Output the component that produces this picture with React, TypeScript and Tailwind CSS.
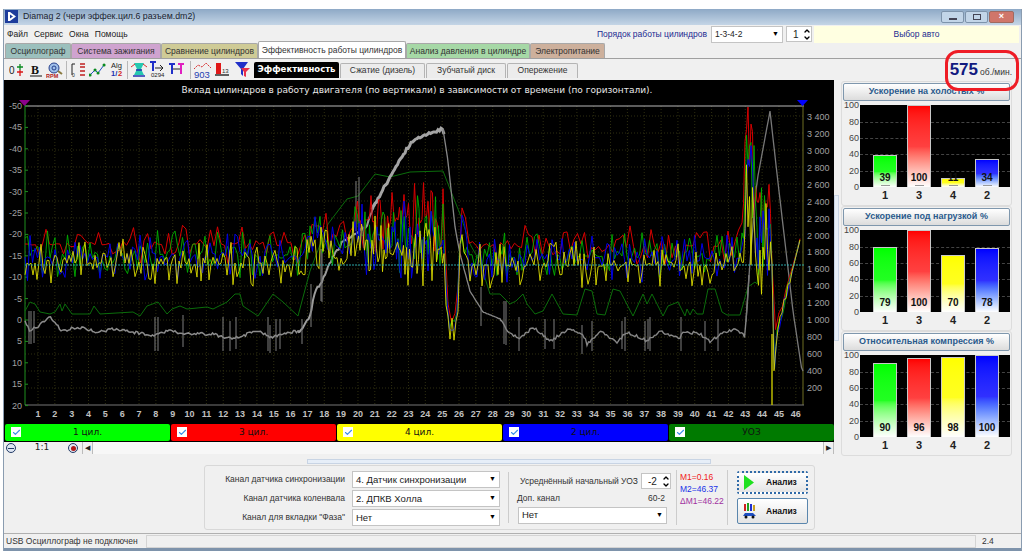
import { Check, ChevronDown, ChevronUp } from "lucide-react";

// cheap seeded random so the traces stay the same on every load
function rng(seed: number) {
  let s = seed;
  return () => {
    s = (s + 0x6d2b79f5) | 0;
    let t = Math.imul(s ^ (s >>> 15), 1 | s);
    t = (t + Math.imul(t ^ (t >>> 7), 61 | t)) ^ t;
    return ((t ^ (t >>> 14)) >>> 0) / 4294967296;
  };
}

type Pt = [number, number];

function interp(points: Pt[], x: number) {
  for (let i = 1; i < points.length; i++) {
    if (x <= points[i][0]) {
      const [x0, y0] = points[i - 1];
      const [x1, y1] = points[i];
      return y0 + ((y1 - y0) * (x - x0)) / (x1 - x0 || 1);
    }
  }
  return points[points.length - 1][1];
}

function toPath(points: Pt[]) {
  return points.map((p, i) => `${i ? "L" : "M"}${p[0].toFixed(1)} ${p[1].toFixed(1)}`).join(" ");
}

const centerLine: Pt[] = [
  [25, 256], [300, 256], [312, 236], [330, 250], [345, 250], [360, 238], [443, 236], [447, 300], [450, 335],
  [455, 322], [458, 310], [460, 236], [470, 258], [482, 258], [740, 258], [744, 230], [747, 160], [752, 160],
  [756, 225], [770, 235], [772, 270], [773, 385], [776, 335], [800, 240],
];
const ampLine: Pt[] = [
  [25, 12], [300, 12], [345, 13], [360, 20], [443, 20], [447, 8], [458, 8], [460, 14], [470, 12], [740, 12],
  [746, 40], [752, 40], [756, 26], [770, 26], [772, 6], [776, 5], [800, 0.5],
];

// peaked noise: most samples stay near the band, a few spike out of it
function cylinderTrace(seed: number, offset: number, step: number, noise: number) {
  const r = rng(seed);
  const pts: Pt[] = [];
  let x = 25;
  while (x <= 800) {
    const a = interp(ampLine, x);
    const n = r() - 0.5;
    const y = interp(centerLine, x) + (offset * a) / 12 + 3.2 * n * Math.abs(n) * noise * (a / 12);
    pts.push([x, Math.max(108, y)]);
    x += a >= 18 ? 1.5 : step;
  }
  return toPath(pts);
}

const greenKeys: Pt[] = [
  [25, 312], [30, 303], [35, 305], [40, 313], [50, 315], [55, 313], [60, 305], [62, 312], [65, 305], [72, 315],
  [90, 315], [94, 307], [100, 315], [133, 313], [140, 317], [147, 307], [158, 303], [167, 315], [172, 310],
  [180, 307], [187, 310], [207, 308], [213, 310], [227, 303], [235, 295], [240, 295], [243, 307], [258, 317],
  [273, 295], [283, 303], [298, 317], [302, 302], [310, 272], [328, 225], [347, 200], [358, 197], [375, 175],
  [390, 178], [410, 173], [443, 172], [450, 190], [460, 215], [470, 245], [480, 263], [490, 295], [500, 295],
  [510, 305], [516, 302], [523, 295], [527, 305], [535, 315], [543, 312], [552, 295], [563, 315], [577, 316],
  [585, 290], [592, 292], [597, 315], [605, 316], [613, 290], [620, 292], [633, 317], [643, 295], [647, 305],
  [652, 295], [663, 317], [668, 307], [678, 303], [685, 317], [687, 310], [690, 316], [693, 310], [697, 315],
  [703, 315], [708, 290], [715, 290], [722, 313], [727, 316], [740, 316], [748, 288], [755, 283], [757, 285],
  [760, 258],
];

const grayKeys: Pt[] = [
  [25, 322], [30, 332], [37, 328], [50, 318], [62, 332], [77, 328], [97, 333], [113, 330], [133, 333], [155, 337],
  [167, 332], [190, 335], [213, 335], [233, 340], [257, 332], [272, 338], [293, 333], [300, 333], [310, 318],
  [315, 292], [322, 282], [333, 258], [343, 242], [367, 227], [373, 208], [393, 173], [410, 145], [420, 138],
  [443, 130], [448, 162], [455, 228], [460, 255], [470, 292], [483, 313], [500, 320], [507, 332], [520, 340],
  [533, 328], [550, 342], [570, 330], [583, 335], [587, 345], [600, 332], [617, 343], [627, 333], [647, 342],
  [660, 332], [680, 340], [683, 332], [700, 335], [710, 343], [723, 333], [737, 330], [745, 338], [750, 262],
  [757, 182], [770, 112], [777, 175], [793, 312], [802, 372],
];

function grayTrace(from: number, to: number, jitter: number) {
  const r = rng(from + 7);
  const pts: Pt[] = [];
  for (let x = from; x <= to; x += 1.5) {
    pts.push([x, interp(grayKeys, x) + (r() - 0.5) * jitter]);
  }
  return toPath(pts);
}

const graySpikes: [number, number, number][] = [
  [29, 312, 345], [31, 312, 345], [34, 312, 344], [155, 318, 352], [158, 318, 352], [183, 316, 348], [223, 318, 352],
  [230, 322, 352], [236, 318, 350], [268, 318, 352], [270, 326, 354], [276, 320, 352], [280, 320, 350], [302, 320, 345],
  [311, 285, 328], [321, 250, 302], [322, 250, 303], [356, 182, 232], [359, 178, 232], [481, 288, 327], [504, 302, 345],
  [506, 302, 346], [519, 318, 352], [545, 320, 350], [554, 320, 350], [582, 326, 355], [592, 322, 352], [622, 322, 350],
  [625, 318, 352], [645, 322, 352], [648, 320, 350], [650, 318, 352], [681, 318, 352], [705, 322, 352], [718, 320, 352],
];

const yLabels = [-50, -45, -40, -35, -30, -25, -20, -15, -10, -5, 0, 5, 10, 15, 20];
const rpmLabels = ["200", "400", "600", "800", "1 000", "1 200", "1 400", "1 600", "1 800", "2 000", "2 200", "2 400", "2 600", "2 800", "3 000", "3 200", "3 400"];
const xLabels = Array.from({ length: 46 }, (_, i) => i + 1);
const hGrid = Array.from({ length: 17 }, (_, i) => 406 - (i + 1) * 17);
const tickFont = "'Liberation Sans', sans-serif";

function MainChart() {
  return (
    <svg width={830} height={344} viewBox="4 81 830 344" className="block bg-black">
      <text x={417} y={94} fill="#e8e8e8" fontSize={9} textAnchor="middle" fontFamily="'DejaVu Sans', sans-serif">
        Вклад цилиндров в работу двигателя (по вертикали) в зависимости от времени (по горизонтали).
      </text>

      {xLabels.map((n) => (
        <line key={n} x1={38 + (n - 1) * 16.84} x2={38 + (n - 1) * 16.84} y1={107} y2={406} stroke="#2e2e10" strokeDasharray="1 2" />
      ))}
      {hGrid.map((y) => (
        <line key={y} x1={25} x2={803} y1={y} y2={y} stroke="#2e2e10" strokeDasharray="1 2" />
      ))}

      <line x1={25} x2={804} y1={107} y2={107} stroke="#b8b8b8" />
      <line x1={25} x2={25} y1={107} y2={406} stroke="#1f8f1f" />
      <line x1={803} x2={803} y1={107} y2={406} stroke="#6e6e22" />
      <line x1={25} x2={804} y1={406} y2={406} stroke="#777" />
      {yLabels.map((v, i) => (
        <g key={v}>
          <line x1={25} x2={28} y1={107 + i * 21.4} y2={107 + i * 21.4} stroke="#1f8f1f" />
          <text x={22} y={110 + i * 21.4} fill="#a0a0a0" fontSize={9} textAnchor="end" fontFamily={tickFont}>
            {v}
          </text>
        </g>
      ))}
      {rpmLabels.map((v, i) => (
        <text key={v} x={807} y={392 - i * 16.94} fill="#a0a0a0" fontSize={9} fontFamily={tickFont}>
          {v}
        </text>
      ))}
      {xLabels.map((n) => (
        <text key={n} x={38 + (n - 1) * 16.84} y={418} fill="#c0c0c0" fontSize={9} fontWeight="bold" textAnchor="middle" fontFamily={tickFont}>
          {n}
        </text>
      ))}

      <path d="M19 101 H30 L24.5 107 Z" fill="#8b008b" />
      <path d="M797 101 H808 L802.5 107 Z" fill="#0000ff" />

      <path d={toPath(greenKeys)} fill="none" stroke="#0b6d0b" strokeWidth={1} />
      <path d={grayTrace(25, 300, 3)} fill="none" stroke="#8c8c8c" strokeWidth={1.5} />
      <path d={grayTrace(298, 376, 3)} fill="none" stroke="#9c9c9c" strokeWidth={2} />
      <path d={grayTrace(372, 445, 3)} fill="none" stroke="#a4a4a4" strokeWidth={3} />
      <path d={grayTrace(443, 502, 0.8)} fill="none" stroke="#868686" strokeWidth={1.3} />
      <path d={grayTrace(500, 749, 3)} fill="none" stroke="#868686" strokeWidth={1.4} />
      <path d={grayTrace(746, 803, 0.5)} fill="none" stroke="#787878" strokeWidth={1.3} />
      {graySpikes.map(([x, y1, y2], i) => (
        <line key={i} x1={x} x2={x} y1={y1} y2={y2} stroke="#7e7e7e" />
      ))}

      <path d={cylinderTrace(11, -11, 3.5, 26)} fill="none" stroke="#d80000" strokeWidth={1} />
      <path d={cylinderTrace(23, -1, 2.5, 30)} fill="none" stroke="#00b000" strokeWidth={0.9} />
      <path d={cylinderTrace(37, 2, 2.5, 30)} fill="none" stroke="#0000e6" strokeWidth={1} />
      <path d={cylinderTrace(41, 8, 2, 30)} fill="none" stroke="#dcdc00" strokeWidth={0.9} />
      <line x1={25} x2={804} y1={266} y2={266} stroke="#2aa7a7" strokeDasharray="2 1" />
      <line x1={772} x2={772} y1={335} y2={406} stroke="#c8c800" strokeWidth={1.4} />
    </svg>
  );
}

const legend = [
  { label: "1 цил.", bg: "bg-[#00ff00]" },
  { label: "3 цил.", bg: "bg-[#ff0000]" },
  { label: "4 цил.", bg: "bg-[#ffff00]" },
  { label: "2 цил.", bg: "bg-[#0000ff]" },
  { label: "УОЗ", bg: "bg-[#007a00]" },
];

function Legend() {
  return (
    <div className="flex h-[18px] w-[830px] gap-[1px] bg-black pl-[1px] [font-family:'DejaVu_Sans',sans-serif]">
      {legend.map((l) => (
        <div key={l.label} className={`relative flex h-[17px] flex-1 items-center justify-center rounded-[2px] text-[9px] text-[#111] ${l.bg}`}>
          <span className="absolute left-[6px] top-[3px] flex h-[10px] w-[10px] items-center justify-center bg-white">
            <Check size={9} strokeWidth={3} className="text-[#3b8ee8]" />
          </span>
          {l.label}
        </div>
      ))}
    </div>
  );
}

function ScaleRow() {
  return (
    <div className="flex h-[12px] w-[830px] items-center text-[9px] text-[#222]">
      <span className="ml-[2px] flex h-[10px] w-[10px] items-center justify-center rounded-full border border-[#223a66] bg-[#dfe6f2]">
        <span className="h-[1px] w-[6px] bg-[#223a66]" />
      </span>
      <span className="w-[52px] text-center [font-family:'DejaVu_Sans',sans-serif]">1:1</span>
      <span className="flex h-[10px] w-[10px] items-center justify-center rounded-full border border-[#223a66] bg-[#dfe6f2]">
        <span className="h-[5px] w-[5px] rounded-full bg-[#b01818]" />
      </span>
      <span className="ml-[4px] flex h-[12px] w-[11px] items-center justify-center border-x border-[#bbb] text-[7px]">◀</span>
      <span className="h-[12px] flex-1 bg-[#f7f7f7]" />
      <span className="flex h-[12px] w-[11px] items-center justify-center border-x border-[#bbb] text-[7px]">▶</span>
    </div>
  );
}

type BarChartProps = {
  title: string;
  values: number[];
  marks?: boolean;
};

const bars = [
  { label: "1", fill: "from-[#00ff00] via-[#22ff22]" },
  { label: "3", fill: "from-[#ff0000] via-[#ff4040]" },
  { label: "4", fill: "from-[#ffff00] via-[#ffff20]" },
  { label: "2", fill: "from-[#0000ff] via-[#3030ff]" },
];

function BarChart({ title, values, marks }: BarChartProps) {
  return (
    <div className="rounded-[3px] border border-[#dcdcdc] px-[1px] pb-[1px] pt-[1px]">
      <div className="flex h-[18px] items-center justify-center rounded-[2px] border border-[#7f97ad] bg-gradient-to-b from-white to-[#dcdcdc] text-[9px] font-bold text-[#2a5a8c]">
        {title}
      </div>
      <div className="mt-[4px] flex">
        <div className="-my-[5px] flex h-[92px] w-[16px] flex-col justify-between text-right text-[9px] leading-[10px] text-[#444]">
          {[100, 80, 60, 40, 20, 0].map((t) => (
            <span key={t}>{t}</span>
          ))}
        </div>
        <div className="relative ml-[1px] h-[82px] w-[150px] bg-black pl-[8px]">
          {[1, 2, 3, 4].map((i) => (
            <div key={i} className="absolute inset-x-0 border-t border-dashed border-[#444]" style={{ top: i * 16.4 }} />
          ))}
          <div className="relative grid h-full w-[136px] grid-cols-4">
            {bars.map((b, i) => (
              <div key={b.label} className="flex h-full items-end justify-center">
                <div
                  className={`relative w-[24px] border border-b-0 border-[#c8c8c8] bg-gradient-to-b ${b.fill} to-white`}
                  style={{ height: (82 * values[i]) / 100 }}
                >
                  <span className="absolute inset-x-0 bottom-[3px] text-center text-[10px] font-bold leading-[12px] text-[#111]">
                    {values[i]}
                  </span>
                  {marks && <span className="absolute bottom-[1px] left-[7px] h-[1px] w-[9px] bg-[#999]" />}
                </div>
              </div>
            ))}
          </div>
        </div>
      </div>
      <div className="ml-[25px] grid h-[17px] w-[136px] grid-cols-4 items-center text-center text-[11px] font-bold text-[#222]">
        {bars.map((b) => (
          <span key={b.label}>{b.label}</span>
        ))}
      </div>
    </div>
  );
}

function Select({ value, w, size }: { value: string; w: string; size: string }) {
  return (
    <div className={`flex h-[17px] items-center justify-between border border-[#c4c4c4] bg-white px-[3px] text-[#222] ${w} ${size}`}>
      <span>{value}</span>
      <span className="text-[7px] text-black">▼</span>
    </div>
  );
}

function Spinner({ value, w }: { value: string; w: string }) {
  return (
    <div className={`flex h-[16px] items-center justify-between border border-[#c4c4c4] bg-white pl-[6px] text-[10px] text-[#222] ${w}`}>
      <span>{value}</span>
      <span className="flex flex-col">
        <ChevronUp size={8} strokeWidth={4} className="-mb-[1px] text-black" />
        <ChevronDown size={8} strokeWidth={4} className="text-black" />
      </span>
    </div>
  );
}

function IconCell({ children }: { children: React.ReactNode }) {
  return <div className="flex h-[18px] w-[19px] items-center justify-center">{children}</div>;
}

function Toolbar() {
  return (
    <div className="flex items-center pl-[3px]">
      <IconCell>
        <svg width="16" height="14" viewBox="0 0 16 14">
          <text x="0" y="11" fontSize="10" fill="#222" fontFamily={tickFont}>0</text>
          <path d="M8 4h6M11 1v6" stroke="#0a8a20" strokeWidth="1.3" />
          <path d="M8 9h6M11 7v6" stroke="#d81818" strokeWidth="1.3" />
        </svg>
      </IconCell>
      <IconCell>
        <svg width="16" height="14" viewBox="0 0 16 14">
          <text x="3" y="11" fontSize="12" fontWeight="bold" fill="#111" fontFamily="'Liberation Serif', serif">B</text>
          <path d="M2 13h12" stroke="#111" />
        </svg>
      </IconCell>
      <IconCell>
        <svg width="18" height="16" viewBox="0 0 18 16">
          <circle cx="8" cy="6" r="5" fill="#9fc0ea" stroke="#27408c" />
          <circle cx="8" cy="6" r="2" fill="none" stroke="#27408c" />
          <path d="M12 9l4 3" stroke="#8a7a40" strokeWidth="2" />
          <text x="0" y="15.5" fontSize="5.5" fontWeight="bold" fill="#b02020" fontFamily={tickFont}>RPM</text>
        </svg>
      </IconCell>
      <span className="mx-[2px] h-[18px] border-l border-[#b8b8b8]" />
      <IconCell>
        <svg width="16" height="16" viewBox="0 0 16 16">
          <path d="M1 2v11M1 2h3" stroke="#222" strokeWidth="1" fill="none" />
          <text x="1" y="15" fontSize="5" fill="#222" fontFamily={tickFont}>0</text>
          <path d="M9 2h5M9 5h5M9 9h5M9 13h5" stroke="#c02020" strokeWidth="1.4" />
        </svg>
      </IconCell>
      <IconCell>
        <svg width="17" height="14" viewBox="0 0 17 14">
          <path d="M1 12l5-5 3 3 6-8" stroke="#1f4fc0" strokeWidth="1" fill="none" />
          <path d="M1 12h.1M6 7h.1M9 10h.1M15 2h.1" stroke="#0a8a20" strokeWidth="3" strokeLinecap="round" />
        </svg>
      </IconCell>
      <IconCell>
        <svg width="16" height="17" viewBox="0 0 16 17">
          <text x="2" y="7" fontSize="7.5" fill="#222" fontFamily={tickFont}>Alg</text>
          <text x="2" y="15" fontSize="7.5" fontWeight="bold" fill="#2030b0" fontFamily={tickFont}>1/</text>
          <text x="9" y="15" fontSize="7.5" fontWeight="bold" fill="#d02020" fontFamily={tickFont}>2</text>
        </svg>
      </IconCell>
      <span className="mx-[1px] h-[18px] border-l border-[#b8b8b8]" />
      <IconCell>
        <svg width="18" height="17" viewBox="0 0 18 17">
          <path d="M4 2h10l-3 6 3 6H4l3-6z" fill="#26c8b0" />
          <path d="M1 6l4-3M17 6l-4-3" stroke="#d83030" strokeWidth="1" />
          <path d="M3 15h12M6 9h6" stroke="#2030b0" strokeWidth="1.4" />
        </svg>
      </IconCell>
      <IconCell>
        <svg width="17" height="17" viewBox="0 0 17 17">
          <path d="M1 1h6M4 1v9" stroke="#2030c8" strokeWidth="2" />
          <path d="M6 7h8M11 4l3 3-3 3" stroke="#222" fill="none" />
          <text x="2" y="16" fontSize="6" fill="#222" fontFamily={tickFont}>0294</text>
        </svg>
      </IconCell>
      <IconCell>
        <svg width="17" height="15" viewBox="0 0 17 15">
          <path d="M1 2h6M4 2v10" stroke="#2030c8" strokeWidth="2" />
          <path d="M10 2h6M13 2v10" stroke="#e020c0" strokeWidth="2" />
          <path d="M5 7h7" stroke="#222" />
        </svg>
      </IconCell>
      <span className="ml-[4px] mr-[2px] h-[18px] border-l border-[#b8b8b8]" />
      <IconCell>
        <svg width="19" height="18" viewBox="0 0 19 18">
          <path d="M1 8l4-4 4 2 4-4 5 5" stroke="#d83030" fill="none" strokeDasharray="2 1" />
          <text x="1" y="17" fontSize="9.5" fill="#1f3fb0" fontFamily={tickFont}>903</text>
        </svg>
      </IconCell>
      <IconCell>
        <svg width="16" height="15" viewBox="0 0 16 15">
          <path d="M2 1h5v11H2z" fill="#e01818" />
          <text x="8" y="11" fontSize="6" fill="#333" fontFamily={tickFont}>13</text>
          <path d="M1 13h14" stroke="#111" strokeWidth="1.3" />
        </svg>
      </IconCell>
      <span className="w-[2px]" />
      <IconCell>
        <svg width="17" height="17" viewBox="0 0 17 17">
          <path d="M1 1h13L9 8v7L7 13V8z" fill="#2030c8" />
          <path d="M7 7h9L12 11v5l-2-1v-4z" fill="#e8304a" />
        </svg>
      </IconCell>
    </div>
  );
}

const subTabs = [
  { label: "Сжатие (дизель)", w: "w-[85px]" },
  { label: "Зубчатый диск", w: "w-[80px]" },
  { label: "Опережение", w: "w-[71px]" },
];

const mainTabs = [
  { label: "Осциллограф", cls: "w-[66px] bg-[#9cc0bd]" },
  { label: "Система зажигания", cls: "w-[90px] bg-[#cfa3cf]" },
  { label: "Сравнение цилиндров", cls: "w-[97px] bg-[#cfcb96]" },
  { label: "Эффективность работы цилиндров", cls: "w-[148px] bg-white h-[17px] -mt-[2px]" },
  { label: "Анализ давления в цилиндре", cls: "w-[124px] bg-[#a6d8a6]" },
  { label: "Электропитание", cls: "w-[75px] bg-[#cdb09c]" },
];

export default function App() {
  return (
    <div className="relative h-[551px] w-[1024px] overflow-hidden whitespace-nowrap bg-white pt-[9px] text-[8.5px] [font-family:'Liberation_Sans',sans-serif]">
      <div className="ml-[3px] flex h-[542px] w-[1019px] flex-col border-x border-[#8a9cb0] bg-[#f0f0f0]">
        {/* title bar */}
        <div className="flex h-[16px] items-center bg-gradient-to-b from-[#8ea9c6] to-[#c4d5e6] pl-[1px]">
          <svg width="13" height="13" viewBox="0 0 13 13">
            <rect width="13" height="13" fill="#1d3c9c" />
            <path d="M3 2h2l6 4.5L5 11H3z" fill="#fff" />
            <path d="M5 4.5l3 2-3 2z" fill="#1d3c9c" />
          </svg>
          <span className="ml-[5px] text-[8.8px] text-[#1a2430]">Diamag 2 (чери эффек.цил.6 разъем.dm2)</span>
          <div className="ml-auto mr-[7px] flex gap-[1px]">
            <span className="flex h-[12px] w-[23px] items-end justify-center rounded-[2px] border border-[#7d93ab] bg-[#c2d5e8] pb-[2px]">
              <span className="h-[2px] w-[8px] bg-[#445]" />
            </span>
            <span className="flex h-[12px] w-[23px] items-center justify-center rounded-[2px] border border-[#7d93ab] bg-[#c2d5e8]">
              <span className="h-[6px] w-[8px] border border-[#445]" />
            </span>
            <span className="flex h-[12px] w-[25px] items-center justify-center rounded-[2px] border border-[#a06a60] bg-[#d0766a] text-[9px] font-bold leading-none text-white">
              ×
            </span>
          </div>
        </div>

        {/* menu + cylinder order */}
        <div className="flex h-[19px] items-center text-[#222]">
          <div className="ml-[3px] flex gap-[6px]">
            <span>Файл</span>
            <span>Сервис</span>
            <span>Окна</span>
            <span>Помощь</span>
          </div>
          <span className="ml-auto mr-[4px] text-[#1a2a90]">Порядок работы цилиндров</span>
          <Select value="1-3-4-2" w="w-[72px]" size="text-[8.5px]" />
          <div className="ml-[3px] mr-[2px]">
            <Spinner value="1" w="w-[26px]" />
          </div>
          <div className="mr-[2px] flex h-[17px] w-[205px] items-center justify-center bg-[#ffffe1] text-[#1a2a90]">Выбор авто</div>
        </div>

        {/* main tabs */}
        <div className="flex h-[16px] items-end border-b border-[#a0a0a0] pl-[1px]">
          {mainTabs.map((t) => (
            <div
              key={t.label}
              className={`flex h-[15px] items-center justify-center rounded-t-[2px] border border-b-0 border-[#a8a8a8] text-[#333] ${t.cls}`}
            >
              {t.label}
            </div>
          ))}
        </div>

        {/* toolbar + sub tabs */}
        <div className="flex h-[21px] items-center">
          <Toolbar />
          <div className="ml-[2px] flex h-[16px] items-end gap-[1px]">
            <div className="flex h-[16px] w-[85px] items-center justify-center rounded-t-[2px] bg-black text-[8.5px] font-bold text-white [font-family:'DejaVu_Sans',sans-serif]">
              Эффективность
            </div>
            {subTabs.map((t) => (
              <div key={t.label} className={`flex h-[15px] items-center justify-center rounded-t-[2px] border border-b-0 border-[#b4b4b4] bg-[#ececec] text-[#333] ${t.w}`}>
                {t.label}
              </div>
            ))}
          </div>
          <div className="ml-auto mr-[9px] flex items-baseline gap-[2px] text-[#111a80]">
            <span className="text-[17px] font-bold leading-none">575</span>
            <span className="text-[8.5px] text-[#333]">об./мин.</span>
          </div>
        </div>

        {/* chart area and side charts */}
        <div className="flex">
          <div className="flex w-[830px] flex-col">
            <MainChart />
            <Legend />
            <ScaleRow />
          </div>
          <div className="ml-[2px] mt-[1px] flex w-[176px] flex-col pl-[5px]">
            <BarChart title="Ускорение на холостых %" values={[39, 100, 11, 34]} marks />
            <BarChart title="Ускорение под нагрузкой %" values={[79, 100, 70, 78]} />
            <BarChart title="Относительная компрессия %" values={[90, 96, 98, 100]} />
          </div>
        </div>

        {/* splitter */}
        <div className="mt-[3px] flex justify-center">
          <div className="ml-[-8px] h-[5px] w-[404px] border border-[#c8d4e4] bg-[#e6eef8]" />
        </div>

        {/* bottom panel */}
        <div className="ml-[200px] mt-[1px] flex h-[66px] w-[611px] rounded-[3px] border border-[#d8d8d8] text-[#333]">
          <div className="flex w-[303px] flex-col gap-[2px] pt-[5px]">
            {[
              ["Канал датчика синхронизации", "4.  Датчик синхронизации"],
              ["Канал датчика коленвала", "2.  ДПКВ Холла"],
              ['Канал для вкладки "Фаза"', "Нет"],
            ].map(([label, value]) => (
              <div key={label} className="flex items-center">
                <span className="w-[140px] text-right">{label}</span>
                <span className="ml-[7px]">
                  <Select value={value} w="w-[148px]" size="text-[9.5px]" />
                </span>
              </div>
            ))}
          </div>
          <span className="my-[6px] border-l border-[#ccc]" />
          <div className="w-[167px] pl-[8px] pt-[7px]">
            <div className="flex items-center justify-end pr-[5px]">
              <span className="mr-[3px]">Усреднённый начальный УОЗ</span>
              <Spinner value="-2" w="w-[30px]" />
            </div>
            <div className="mt-[3px] flex justify-between pr-[11px]">
              <span>Доп. канал</span>
              <span>60-2</span>
            </div>
            <div className="mt-[2px] pl-[1px]">
              <Select value="Нет" w="w-[149px]" size="text-[9.5px]" />
            </div>
          </div>
          <span className="my-[4px] border-l border-[#ccc]" />
          <div className="w-[50px] pl-[3px] pt-[5px] leading-[12px]">
            <div className="text-[#f02020]">M1=0.16</div>
            <div className="text-[#2030e8]">M2=46.37</div>
            <div className="text-[#a030a0]">ΔM1=46.22</div>
          </div>
          <span className="my-[4px] border-l border-[#ccc]" />
          <div className="flex flex-col gap-[4px] pl-[9px] pt-[5px]">
            <button className="flex h-[23px] w-[71px] items-center rounded-[2px] border-2 border-dotted border-[#2f6aa8] bg-gradient-to-b from-white to-[#e4e4e4] pl-[5px] font-bold text-[#111]">
              <svg width="10" height="15" viewBox="0 0 10 15">
                <path d="M0 0l10 7.5L0 15z" fill="#1fe01f" />
              </svg>
              <span className="ml-[12px]">Анализ</span>
            </button>
            <button className="flex h-[26px] w-[71px] items-center rounded-[2px] border border-[#5a86ad] bg-gradient-to-b from-white to-[#e4e4e4] pl-[4px] font-bold text-[#111]">
              <svg width="16" height="16" viewBox="0 0 16 16">
                <path d="M3 1v7" stroke="#d02020" strokeWidth="2" />
                <path d="M6 0v8" stroke="#20a020" strokeWidth="2" />
                <path d="M9 1v7" stroke="#2030d0" strokeWidth="2" />
                <path d="M12 2v6" stroke="#c8a020" strokeWidth="2" />
                <path d="M1 13l2-3h8l3 3z" fill="#1f4fc0" />
                <circle cx="4" cy="14" r="1.5" fill="#111" />
                <circle cx="11" cy="14" r="1.5" fill="#111" />
              </svg>
              <span className="ml-[8px]">Анализ</span>
            </button>
          </div>
        </div>

        {/* status bar */}
        <div className="mt-[3px] flex h-[15px] items-center border-t border-[#b0b0b0] text-[#333]">
          <span className="w-[142px] pl-[2px]">USB Осциллограф не подключен</span>
          <span className="h-[13px] w-[830px] border border-[#d4d4d4]" />
          <span className="ml-[6px]">2.4</span>
        </div>
        <div className="h-[3px] bg-[#7e93ab]" />
      </div>

      {/* the red marker someone drew over the rpm readout */}
      <div className="absolute left-[945px] top-[50px] h-[41px] w-[74px] rounded-[13px] border-[3px] border-[#ee1c25]" />
      {/* vertical splitter between chart and side charts */}
      <div className="absolute left-[834px] top-[195px] h-[146px] w-[5px] border border-[#c8d4e4] bg-[#e6eef8]" />
    </div>
  );
}
